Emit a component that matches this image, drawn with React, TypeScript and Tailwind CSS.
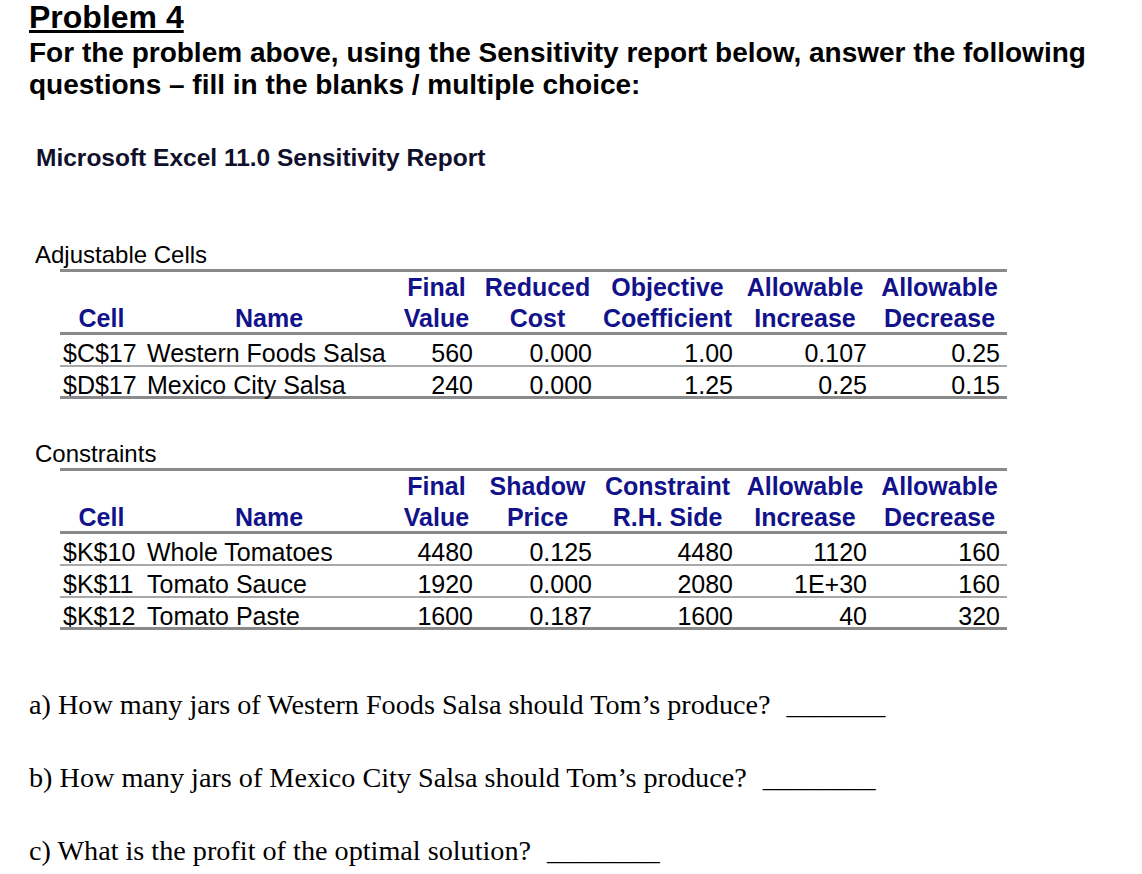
import React from "react";

const cols = "grid grid-cols-[83px_252px_83px_119px_141px_134px_135px]";

type TableProps = {
  title: string;
  top: string[];
  bottom: string[];
  rows: string[][];
};

function SensitivityTable({ title, top, bottom, rows }: TableProps) {
  return (
    <div className="flex flex-col">
      {/* section title */}
      <div className="pl-[6px] h-[31px] pt-[3px] leading-[28px] text-[24px] text-black">{title}</div>
      <div className="ml-[31px] w-[947px] border-t-[3px] border-[#8a8a8a]">
        {/* header, two lines */}
        <div className={`${cols} h-[63px] font-bold text-[25px] text-[#12128a] border-b-[3px] border-[#8a8a8a]`}>
          {top.map((t, i) => (
            <div key={"t" + i} className="flex flex-col items-center justify-center leading-[31px]">
              <span>{t || "\u00a0"}</span>
              <span>{bottom[i]}</span>
            </div>
          ))}
        </div>
        {/* data rows */}
        {rows.map((r, ri) => (
          <div
            key={ri}
            className={`${cols} h-[32px] items-center text-[25px] text-black ${
              ri === rows.length - 1 ? "border-b-[3px] border-[#8a8a8a]" : "border-b-2 border-[#a8a8a8]"
            }`}
          >
            <span className="pl-[3px]">{r[0]}</span>
            <span className="pl-[4px]">{r[1]}</span>
            {r.slice(2).map((v, vi) => (
              <span key={vi} className={`text-right ${vi === 4 ? "pr-[7px]" : "pr-[5px]"}`}>
                {v}
              </span>
            ))}
          </div>
        ))}
      </div>
    </div>
  );
}

function Question({ text, blank }: { text: string; blank: string }) {
  return (
    <div className="h-[32px] leading-[32px] whitespace-nowrap">
      {text}
      <span className="ml-[16px]">{blank}</span>
    </div>
  );
}

export default function App() {
  return (
    <div className="w-[1142px] h-[874px] bg-white overflow-hidden font-['Liberation_Sans',Arial,sans-serif] text-black">
      <div className="pl-[29px] pt-[1px]">
        {/* heading */}
        <h1 className="text-[32px] leading-[32px] font-bold underline decoration-[3px] underline-offset-[2px]">
          Problem 4
        </h1>
        <p className="mt-[4px] text-[28px] leading-[32px] font-bold">
          For the problem above, using the Sensitivity report below, answer the following
          <br />
          questions – fill in the blanks / multiple choice:
        </p>

        <div className="mt-[43px] pl-[7px] text-[24.5px] leading-[28px] font-bold text-[#10102c]">
          Microsoft Excel 11.0 Sensitivity Report
        </div>
      </div>

      <div className="mt-[66px] flex flex-col gap-[38px] pl-[29px]">
        <SensitivityTable
          title="Adjustable Cells"
          top={["", "", "Final", "Reduced", "Objective", "Allowable", "Allowable"]}
          bottom={["Cell", "Name", "Value", "Cost", "Coefficient", "Increase", "Decrease"]}
          rows={[
            ["$C$17", "Western Foods Salsa", "560", "0.000", "1.00", "0.107", "0.25"],
            ["$D$17", "Mexico City Salsa", "240", "0.000", "1.25", "0.25", "0.15"],
          ]}
        />
        <SensitivityTable
          title="Constraints"
          top={["", "", "Final", "Shadow", "Constraint", "Allowable", "Allowable"]}
          bottom={["Cell", "Name", "Value", "Price", "R.H. Side", "Increase", "Decrease"]}
          rows={[
            ["$K$10", "Whole Tomatoes", "4480", "0.125", "4480", "1120", "160"],
            ["$K$11", "Tomato Sauce", "1920", "0.000", "2080", "1E+30", "160"],
            ["$K$12", "Tomato Paste", "1600", "0.187", "1600", "40", "320"],
          ]}
        />
      </div>

      {/* questions */}
      <div className="mt-[59px] pl-[29px] flex flex-col gap-[41px] font-['Liberation_Serif','Times_New_Roman',serif] text-[28.2px]">
        <Question text="a) How many jars of Western Foods Salsa should Tom’s produce?" blank="_______" />
        <Question text="b) How many jars of Mexico City Salsa should Tom’s produce?" blank="________" />
        <Question text="c) What is the profit of the optimal solution?" blank="________" />
      </div>
    </div>
  );
}
